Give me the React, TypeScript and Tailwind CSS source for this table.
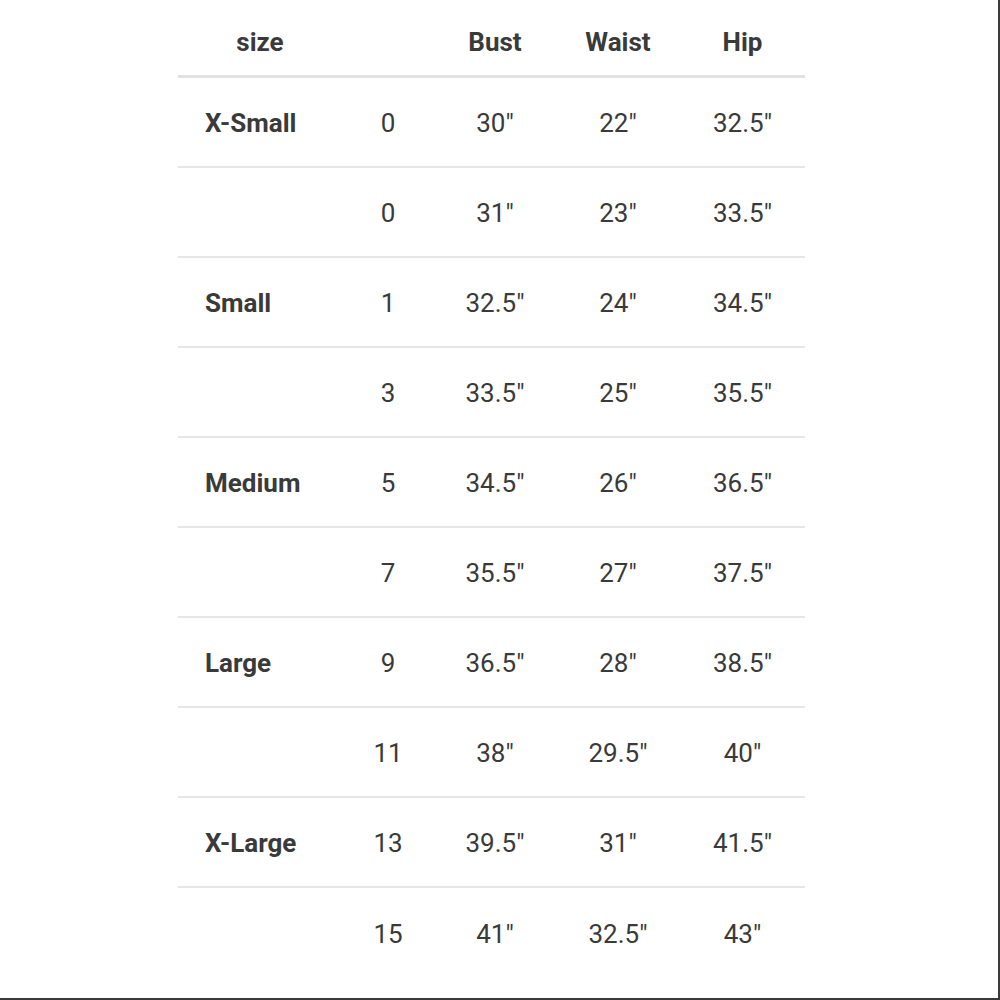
const rows = [
  { size: "X-Small", num: "0", bust: '30"', waist: '22"', hip: '32.5"' },
  { size: "", num: "0", bust: '31"', waist: '23"', hip: '33.5"' },
  { size: "Small", num: "1", bust: '32.5"', waist: '24"', hip: '34.5"' },
  { size: "", num: "3", bust: '33.5"', waist: '25"', hip: '35.5"' },
  { size: "Medium", num: "5", bust: '34.5"', waist: '26"', hip: '36.5"' },
  { size: "", num: "7", bust: '35.5"', waist: '27"', hip: '37.5"' },
  { size: "Large", num: "9", bust: '36.5"', waist: '28"', hip: '38.5"' },
  { size: "", num: "11", bust: '38"', waist: '29.5"', hip: '40"' },
  { size: "X-Large", num: "13", bust: '39.5"', waist: '31"', hip: '41.5"' },
  { size: "", num: "15", bust: '41"', waist: '32.5"', hip: '43"' },
];

const cols = "grid grid-cols-[164px_92px_122px_124px_125px]";

export default function App() {
  return (
    <div className="w-[1000px] h-[1000px] bg-white border-r-[2px] border-b-[2px] border-[#3a3a3a] font-['Roboto',sans-serif] text-[26px] text-[#3a3a3a] overflow-hidden">
      <div className="ml-[178px] w-[627px]">
        <div className={`${cols} h-[78px] items-center pt-[9px] border-b-[3px] border-[#e2e2e2] font-bold`}>
          <div className="text-center">size</div>
          <div />
          <div className="text-center">Bust</div>
          <div className="text-center">Waist</div>
          <div className="text-center">Hip</div>
        </div>
        {rows.map((r, i) => (
          <div
            key={i}
            className={`${cols} h-[90px] items-center pt-[2px] ${i < rows.length - 1 ? "border-b-2 border-[#e6e6e6]" : ""}`}
          >
            <div className="pl-[27px] font-bold">{r.size}</div>
            <div className="text-center">{r.num}</div>
            <div className="text-center">{r.bust}</div>
            <div className="text-center">{r.waist}</div>
            <div className="text-center">{r.hip}</div>
          </div>
        ))}
      </div>
    </div>
  );
}
